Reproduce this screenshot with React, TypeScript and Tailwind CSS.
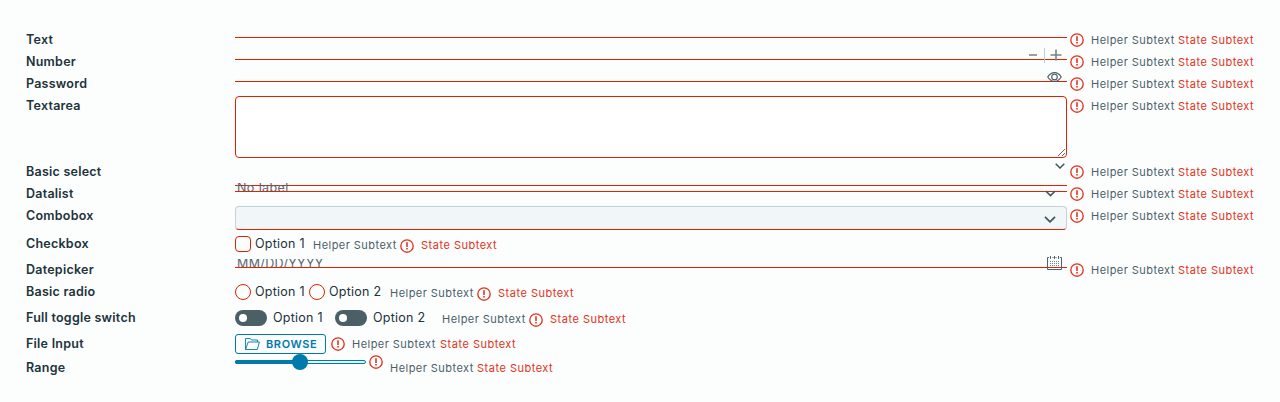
import type { ReactNode } from "react";

function ErrorIcon({ className = "" }: { className?: string }) {
  return (
    <svg viewBox="0 0 14 14" className={`h-[14px] w-[14px] shrink-0 ${className}`} fill="none" stroke="#e23220" strokeWidth="1.35">
      <circle cx="7" cy="7" r="6.2" />
      <path d="M7 3.2v4.7" strokeWidth="1.6" />
      <path d="M7 9v1.6" strokeWidth="1.6" />
    </svg>
  );
}

function Helper({ className = "" }: { className?: string }) {
  return <span className={`shrink-0 text-[11px] leading-[16px] tracking-[0.46px] text-[#4a5d69] ${className}`}>Helper Subtext</span>;
}

function State({ className = "" }: { className?: string }) {
  return <span className={`shrink-0 text-[11px] leading-[16px] tracking-[0.5px] text-[#e23220] ${className}`}>State Subtext</span>;
}

function Trailing() {
  return (
    <div className="flex pl-[3px] pt-[4px]">
      <ErrorIcon />
      <Helper className="ml-[7px] w-[87px] -mt-px" />
      <State className="-mt-px" />
    </div>
  );
}

function Row({ label, height = "h-[22px]", children }: { label: string; height?: string; children: ReactNode }) {
  return (
    <div className={`flex items-start ${height}`}>
      <div className="w-[209px] shrink-0 text-[12.5px] font-semibold leading-[21px] tracking-[0.24px] text-[#21333b]">{label}</div>
      {children}
    </div>
  );
}

function Line({ height = "h-[9px]", children }: { height?: string; children?: ReactNode }) {
  return <div className={`relative w-[832px] shrink-0 border-b border-[#e12200] ${height}`}>{children}</div>;
}

function Chevron({ className }: { className: string }) {
  return (
    <svg viewBox="0 0 10 6" className={`absolute ${className}`} fill="none" stroke="#45565f" strokeWidth="1.5">
      <path d="M.7.7 5 5 9.3.7" />
    </svg>
  );
}

function Option({ n, className = "" }: { n: number; className?: string }) {
  return <span className={`shrink-0 text-[12.5px] leading-[21px] tracking-[0.25px] text-[#21333b] ${className}`}>Option {n}</span>;
}

function Toggle() {
  return (
    <span className="mt-[3px] flex h-4 w-8 shrink-0 items-center rounded-full bg-[#4b5f67] pl-1">
      <span className="h-2 w-2 rounded-full bg-white" />
    </span>
  );
}

export default function App() {
  return (
    <main className="h-[402px] w-[1280px] overflow-hidden bg-[#fcfdfd] pl-[26px] pt-[29px] font-['Inter',sans-serif]">
      <Row label="Text"><Line /><Trailing /></Row>
      <Row label="Number">
        <Line>
          <svg viewBox="0 0 36 16" className="absolute left-[793px] top-[-4px] h-4 w-9" fill="none">
            <path d="M1 8h8M22.5 8h11M28 2.5v11" stroke="#73858d" strokeWidth="1.6" />
            <path d="M16.5 1v16" stroke="#c1cdd4" />
          </svg>
        </Line>
        <Trailing />
      </Row>
      <Row label="Password">
        <Line>
          <svg viewBox="0 0 15 10" className="absolute left-[812px] top-[-1px] h-[10px] w-[15px]" fill="none" stroke="#455a64" strokeWidth="1.1">
            <path d="M.7 5C2.7 1.9 5 .6 7.5.6S12.300 1.900 14.300 5C12.300 8.100 10 9.400 7.500 9.400S2.700 8.100.7 5Z" />
            <circle cx="7.5" cy="5" r="2.8" />
          </svg>
        </Line>
        <Trailing />
      </Row>
      <Row label="Textarea" height="h-[66px]">
        <textarea readOnly aria-label="Textarea" className="mt-px h-[62px] w-[832px] shrink-0 resize rounded-[4px] border border-[#e12200] bg-white outline-none" />
        <Trailing />
      </Row>
      <Row label="Basic select">
        <Line height="h-[25px]"><Chevron className="left-[820px] top-[2px] h-[6px] w-[10px]" /></Line>
        <Trailing />
      </Row>
      <Row label="Datalist">
        <Line>
          <div className="h-[8px] overflow-hidden pl-[2px] text-[12.5px] tracking-[0.4px] text-[#566872]"><div className="-mt-[4px] leading-[17px]">No label</div></div>
          <Chevron className="left-[810px] top-[7px] h-[7px] w-[11px]" />
        </Line>
        <Trailing />
      </Row>
      <Row label="Combobox" height="h-[28px]">
        <div className="relative mt-px h-6 w-[832px] shrink-0 rounded-[4px] border border-[#c5d0d7] border-b-[#e12200] bg-[#f1f6f8]">
          <Chevron className="left-[808px] top-[9px] h-[7px] w-[12px]" />
        </div>
        <Trailing />
      </Row>
      <Row label="Checkbox" height="h-[26px]">
        <span className="mt-[3px] h-4 w-4 shrink-0 rounded-[4px] border border-[#e12200]" />
        <Option n={1} className="ml-1 w-[58px]" />
        <Helper className="mt-[4px] w-[87px]" />
        <ErrorIcon className="mt-[6px]" />
        <State className="ml-[7px] mt-[4px]" />
      </Row>
      <Row label="Datepicker">
        <Line>
          <div className="h-[8px] overflow-hidden pl-[2px] text-[12.5px] tracking-[0.35px] text-[#566872]"><div className="-mt-[4px] leading-[17px]">MM/DD/YYYY</div></div>
          <svg viewBox="0 0 15 14" className="absolute left-[812px] top-[-3px] h-[14px] w-[15px]" fill="none" stroke="#50636d">
            <path d="M2 1.500H.5v12h14v-12H13M5.500 1.500h1M8.500 1.500h1M3.500 0v3M7.500 0v3M11.500 0v3" />
            <path d="M3 5.500h9M3 7.500h9M3 9.500h9" strokeDasharray="1 1" strokeWidth=".8" />
          </svg>
        </Line>
        <Trailing />
      </Row>
      <Row label="Basic radio" height="h-[26px]">
        <span className="mt-[3px] h-4 w-4 shrink-0 rounded-full border border-[#e12200]" />
        <Option n={1} className="ml-1 w-[54px]" />
        <span className="mt-[3px] h-4 w-4 shrink-0 rounded-full border border-[#e12200]" />
        <Option n={2} className="ml-1 w-[61px]" />
        <Helper className="mt-[4px] w-[87px]" />
        <ErrorIcon className="mt-[6px]" />
        <State className="ml-[7px] mt-[4px]" />
      </Row>
      <Row label="Full toggle switch" height="h-[26px]">
        <Toggle />
        <Option n={1} className="ml-[6px] w-[62px]" />
        <Toggle />
        <Option n={2} className="ml-[6px] w-[69px]" />
        <Helper className="mt-[4px] w-[87px]" />
        <ErrorIcon className="mt-[6px]" />
        <State className="ml-[7px] mt-[4px]" />
      </Row>
      <Row label="File Input" height="h-[24px]">
        <button className="mt-px flex h-5 w-[91px] shrink-0 items-center rounded-[3px] border border-[#0079ad] pl-[9px] text-[11px] font-semibold tracking-[0.6px] text-[#0079ad]">
          <svg viewBox="0 0 15 12" className="mr-[6px] h-3 w-[15px]" fill="none" stroke="#0079ad" strokeWidth=".9">
            <path d="M12.5 4V2H6.5L5.3.5H.5v11h11.8L14.4 4H3.2L.6 11.5" />
          </svg>
          BROWSE
        </button>
        <ErrorIcon className="ml-[5px] mt-[4px]" />
        <Helper className="ml-[7px] mt-[3px] w-[88px]" />
        <State className="mt-[3px]" />
      </Row>
      <Row label="Range">
        <div className="relative mt-[3px] h-1 w-[131px] shrink-0 rounded-full border border-[#0079ad] bg-[#e3f5fc]">
          <div className="-ml-px -mt-px h-1 w-[66px] rounded-l-full bg-[#0079ad]" />
          <div className="absolute left-[56px] top-[-7px] h-4 w-4 rounded-full bg-[#0079ad]" />
        </div>
        <ErrorIcon className="ml-[3px] -mt-[2px]" />
        <Helper className="ml-[7px] mt-[3px] w-[87px]" />
        <State className="mt-[3px]" />
      </Row>
    </main>
  );
}
